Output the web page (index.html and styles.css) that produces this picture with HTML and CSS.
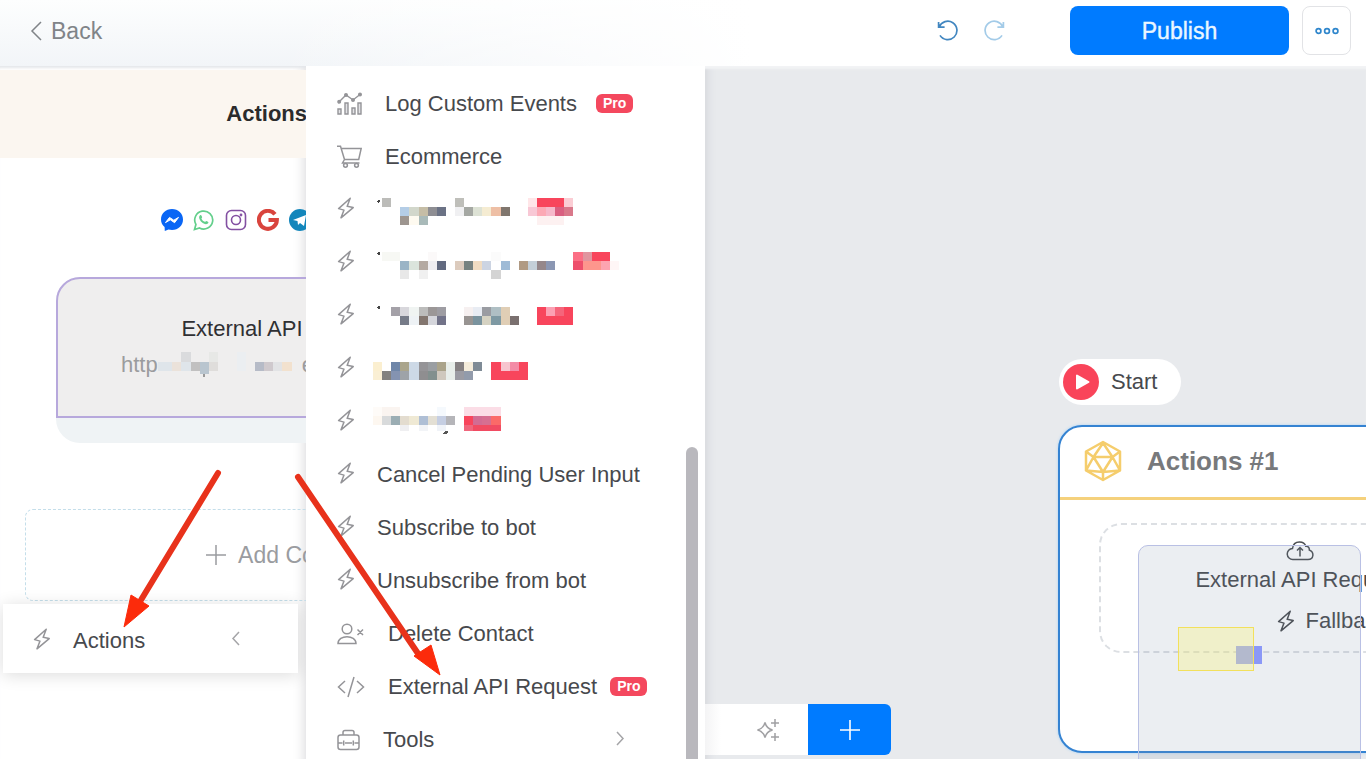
FILE: index.html
```html
<!DOCTYPE html>
<html lang="en">
<head>
<meta charset="utf-8">
<title>Flow builder</title>
<link rel="stylesheet" href="styles.css">
</head>
<body>
<svg class="defs" aria-hidden="true">
  <symbol id="bolt" viewBox="0 0 17 22"><path d="M13.200 1.200 1.600 11.600l5.400 1.500-3 7.700L16.200 10.600l-6-1.300z" fill="none" stroke="currentColor" stroke-width="1.500" stroke-linejoin="round"/></symbol>
</svg>
<header class="topbar">
  <button class="back" type="button">
    <svg width="12" height="20" viewBox="0 0 12 20"><path d="M11 1 2 10 11 19" fill="none" stroke="currentColor" stroke-width="1.5"/></svg>
    Back
  </button>
  <div class="history">
    <button type="button" aria-label="Undo"><svg width="22" height="22" viewBox="0 0 22 22" fill="none" stroke="#4186c0" stroke-width="1.7"><path d="M1.600 2v5.200h6M2.200 7A9.200 9.200 0 1 1 3 15.400"/></svg></button>
    <button type="button" aria-label="Redo"><svg width="22" height="22" viewBox="0 0 22 22" fill="none" stroke="#a3cbe8" stroke-width="1.7"><path d="M20.400 2v5.200h-6M19.800 7A9.200 9.200 0 1 0 19 15.400"/></svg></button>
  </div>
  <button class="publish" type="button">Publish</button>
  <button class="more" type="button" aria-label="More"><svg width="24" height="8" viewBox="0 0 24 8" fill="none" stroke="#2f86cc" stroke-width="1.700"><circle cx="3.500" cy="4" r="2.400"/><circle cx="12" cy="4" r="2.400"/><circle cx="20.500" cy="4" r="2.400"/></svg></button>
</header>

<main class="workspace">
  <section class="panel">
    <div class="panel-inner">
      <h1 class="panel-title">Actions #1</h1>
      <div class="channels">
        <svg width="22" height="22" viewBox="0 0 22 22"><path d="M11 0C4.800 0 0 4.500 0 10.500c0 3.100 1.300 5.700 3.600 7.600L3.800 22l3.700-1.400c1.100.3 2.300.4 3.500.4 6.200 0 11-4.500 11-10.500S17.200 0 11 0z" fill="#0a66f5"/><path d="m4.500 13.600 4-5.200 4.300 2.800 4.700-2.800-3.900 5.300-4.300-2.900z" fill="#fff" stroke="#fff" stroke-linejoin="round"/></svg>
        <svg width="22" height="22" viewBox="0 0 22 22" fill="none" stroke="#63cf8b" stroke-width="1.700"><path d="m1.500 20.500 1.400-5A9 9 0 1 1 6.500 19z"/><path d="M7 6.300c1-.7 1.500.2 2.100 1.800.2.700-.7 1.100-.6 1.600.7 1.500 1.800 2.500 3.300 3.100.7.100 1-.9 1.600-.9 1.700.8 2.400 1.100 2 1.900-1.300 2.500-4.700 1.300-6.600-.5C6.500 11.200 5.200 8 7 6.300z" fill="#63cf8b" stroke="none"/></svg>
        <svg width="22" height="22" viewBox="0 0 22 22" fill="none" stroke="#8350a2" stroke-width="1.600"><rect x="1.500" y="1.500" width="19" height="19" rx="5"/><circle cx="11" cy="11" r="4.500"/><circle cx="16" cy="6" r=".6"/></svg>
        <svg width="22" height="22" viewBox="0 0 22 22" fill="none" stroke="#d9443d" stroke-width="4"><path d="M18 5.300A9 9 0 1 0 19.900 11H11.500"/></svg>
        <svg width="22" height="22" viewBox="0 0 22 22"><circle cx="11" cy="11" r="11" fill="#1386bb"/><path d="m4 11 13-5-2 11-4-3-2 2-.5-4z" fill="#fff"/></svg>
      </div>
      <article class="card">
        <div class="card-body">
          <div>External API Request</div>
          <div class="url">http<svg class="blur" width="144" height="36" viewBox="0 0 144 36" aria-hidden="true">
            <g fill="#dfe5ea"><path d="M0 15h14v9H0z"/><path d="M23 15h10v9H23z"/></g>
            <path d="M14 15h9v9h-9z" fill="#ebe2da"/><path d="M23 5h10v10H23z" fill="#dadbdd"/>
            <path d="M33 15h9v9h-9z" fill="#c1c0c0"/><path d="M42 15h9v12h-9z" fill="#b9c5cf"/><path d="M45 27h2v3h-2z" fill="#999"/>
            <path d="M51 5h9v10h-9z" fill="#e7e8e6"/><path d="M51 15h9v9h-9z" fill="#dfdddb"/>
            <path d="M79 5h9v19h-9z" fill="#ebeef1"/><path d="M97 15h9v9h-9z" fill="#b6bbc7"/><path d="M106 15h9v9h-9z" fill="#cfc9cd"/>
            <path d="M115 15h9v9h-9z" fill="#e2e3e5"/><path d="M124 15h10v9h-10z" fill="#f2e1ce"/>
          </svg>e</div>
        </div>
      </article>
      <button class="add" type="button"><svg width="20" height="20" viewBox="0 0 20 20"><path d="M10 0v20M0 10h20" stroke="currentColor" stroke-width="1.500"/></svg>Add Content</button>
    </div>
    <button class="actions" type="button">
      <svg class="bolt"><use href="#bolt"/></svg>
      <span>Actions</span>
      <svg class="prev" width="9" height="15" viewBox="0 0 9 15"><path d="m8 1-6 6.500L8 14" fill="none" stroke="#a5a5a8" stroke-width="1.500"/></svg>
    </button>
  </section>

  <nav class="menu">
    <button class="item" type="button">
      <svg width="25" height="24" viewBox="0 0 25 24" fill="none" stroke="currentColor" stroke-width="1.400"><path d="m2 10 7-7 7 5 7-5.500"/><g fill="currentColor"><circle cx="2.200" cy="9.800" r="1.300"/><circle cx="9" cy="3" r="1.300"/><circle cx="16" cy="8" r="1.300"/><circle cx="23" cy="2.500" r="1.300"/></g><path d="M1 17h3v5H1zM8 11h3v11H8zM15 16h3v6h-3zM21 11h3v11h-3z" fill="#e3e3e6"/></svg>
      <span>Log Custom Events</span><span class="pro wide">Pro</span>
    </button>
    <button class="item" type="button">
      <svg width="25" height="24" viewBox="0 0 25 24" fill="none" stroke="currentColor" stroke-width="1.500"><path d="M0 1.200h3.500L7.500 14.500h14.200L24.200 3.500H4.300M7.500 14.500l-2 3.500h17"/><circle cx="8.500" cy="20.300" r="1.900"/><circle cx="19.500" cy="20.300" r="1.900"/></svg>
      <span>Ecommerce</span>
    </button>
    <button class="item" type="button" aria-label="Action">
      <svg class="bolt"><use href="#bolt"/></svg>
      <svg class="mosaic" viewBox="0 -1.22 27 5" preserveAspectRatio="none">
        <circle cx=".65" cy=".35" r=".17" fill="#444"/><rect x="1" fill="#bcbcb9"/><rect x="9" fill="#bfbfba"/><rect x="17" fill="#ffe6e8"/><rect x="18" fill="#f8455c"/><rect x="19" fill="#f8455c"/><rect x="20" fill="#f8455c"/><rect x="21" fill="#fbcdd4"/>
        <rect x="3" y="1" fill="#b4cde6"/><rect x="4" y="1" fill="#d2d7cb"/><rect x="5" y="1" fill="#c5bda6"/><rect x="6" y="1" fill="#8e8e93"/><rect x="7" y="1" fill="#6b7285"/><rect x="9" y="1" fill="#f0f0f2"/><rect x="10" y="1" fill="#a5a8a3"/><rect x="11" y="1" fill="#dde2d5"/><rect x="12" y="1" fill="#f5ecd2"/><rect x="13" y="1" fill="#eebfa5"/><rect x="14" y="1" fill="#80766e"/><rect x="17" y="1" fill="#f8c8d5"/><rect x="18" y="1" fill="#fca9b5"/><rect x="19" y="1" fill="#f6b8ca"/><rect x="20" y="1" fill="#d95f80"/><rect x="21" y="1" fill="#d9788a"/>
        <rect x="3" y="2" fill="#9d958f"/><rect x="4" y="2" fill="#fefaf0"/><rect x="5" y="2" fill="#a9bab9"/><rect x="18" y="2" fill="#fdf1f1"/><rect x="19" y="2" fill="#fdf1f1"/><rect x="20" y="2" fill="#fdf1f1"/>
      </svg>
    </button>
    <button class="item" type="button" aria-label="Action">
      <svg class="bolt"><use href="#bolt"/></svg>
      <svg class="mosaic" viewBox="0 -1.33 27 5" preserveAspectRatio="none">
        <circle cx=".65" cy=".2" r=".17" fill="#444"/><rect x="1" fill="#f7f8f4"/><rect x="2" fill="#f7f8f4"/><rect x="6" fill="#fbf9f9"/><rect x="13" fill="#fbfbfb"/><rect x="22" fill="#fb6f85"/><rect x="23" fill="#e0959f"/><rect x="24" fill="#f8455c"/><rect x="25" fill="#f8455c"/>
        <rect x="3" y="1" fill="#9ab4c6"/><rect x="4" y="1" fill="#dbe4dc"/><rect x="5" y="1" fill="#b4a9a2"/><rect x="6" y="1" fill="#efeef2"/><rect x="7" y="1" fill="#626a80"/><rect x="9" y="1" fill="#dccbbd"/><rect x="10" y="1" fill="#768280"/><rect x="11" y="1" fill="#f0dcc2"/><rect x="12" y="1" fill="#ccd4e2"/><rect x="14" y="1" fill="#9fbbd6"/><rect x="16" y="1" fill="#b09a83"/><rect x="17" y="1" fill="#c4cfd8"/><rect x="18" y="1" fill="#95878a"/><rect x="19" y="1" fill="#8b97b3"/><rect x="22" y="1" fill="#ee4f6c"/><rect x="23" y="1" fill="#fd968d"/><rect x="24" y="1" fill="#fd968d"/><rect x="25" y="1" fill="#fda4b0"/><rect x="26" y="1" fill="#fff6f6"/>
        <rect x="3" y="2" fill="#e8e8e8"/><rect x="5" y="2" fill="#f0f0f0"/><rect x="13" y="2" fill="#d4d4d4"/>
      </svg>
    </button>
    <button class="item" type="button" aria-label="Action">
      <svg class="bolt"><use href="#bolt"/></svg>
      <svg class="mosaic" viewBox="0 -1.56 27 5" preserveAspectRatio="none">
        <circle cx=".65" cy="0.05" r=".17" fill="#444"/><rect x="2" fill="#a4a1a8"/><rect x="3" fill="#d8d7dc"/><rect x="4" fill="#f0f4f2"/><rect x="5" fill="#bcbcbb"/><rect x="6" fill="#9b9797"/><rect x="7" fill="#9e9da3"/><rect x="10" fill="#f6f0f0"/><rect x="11" fill="#e8ecf3"/><rect x="12" fill="#9a9ca2"/><rect x="13" fill="#afbfc4"/><rect x="14" fill="#e0ceb5"/><rect x="18" fill="#f8455c"/><rect x="19" fill="#fca0b3"/><rect x="20" fill="#f5657b"/><rect x="21" fill="#f8455c"/>
        <rect x="3" y="1" fill="#767b88"/><rect x="4" y="1" fill="#eef2f5"/><rect x="5" y="1" fill="#83766f"/><rect x="6" y="1" fill="#d5d6dc"/><rect x="7" y="1" fill="#727389"/><rect x="10" y="1" fill="#989492"/><rect x="11" y="1" fill="#7a939e"/><rect x="12" y="1" fill="#d5d2c2"/><rect x="13" y="1" fill="#7e99a3"/><rect x="14" y="1" fill="#e0ceb5"/><rect x="15" y="1" fill="#7a706f"/><rect x="18" y="1" fill="#f8455c"/><rect x="19" y="1" fill="#f8455c"/><rect x="20" y="1" fill="#f8455c"/><rect x="21" y="1" fill="#f8455c"/>
      </svg>
    </button>
    <button class="item" type="button" aria-label="Action">
      <svg class="bolt"><use href="#bolt"/></svg>
      <svg class="mosaic" viewBox="0 -1.78 27 5" preserveAspectRatio="none">
        <rect x="0" fill="#fbefd0"/><rect x="2" fill="#6f86a8"/><rect x="3" fill="#aaa58c"/><rect x="4" fill="#cdd9e6"/><rect x="5" fill="#959497"/><rect x="6" fill="#9a9ea2"/><rect x="7" fill="#aaa38a"/><rect x="8" fill="#e8eeea"/><rect x="9" fill="#858082"/><rect x="10" fill="#f5ecdb"/><rect x="11" fill="#7f8b96"/><rect x="13" fill="#f8455c"/><rect x="14" fill="#f7c5cf"/><rect x="15" fill="#f38ba6"/><rect x="16" fill="#f8455c"/>
        <rect x="0" y="1" fill="#faefd4"/><rect x="1" y="1" fill="#83817f"/><rect x="2" y="1" fill="#8493b1"/><rect x="3" y="1" fill="#9ea3a8"/><rect x="4" y="1" fill="#cdd9e6"/><rect x="5" y="1" fill="#8f8e90"/><rect x="6" y="1" fill="#82908e"/><rect x="7" y="1" fill="#cfc8bd"/><rect x="8" y="1" fill="#e8eeea"/><rect x="9" y="1" fill="#9b9ba3"/><rect x="10" y="1" fill="#929bab"/><rect x="13" y="1" fill="#f8455c"/><rect x="14" y="1" fill="#f8455c"/><rect x="15" y="1" fill="#f8455c"/><rect x="16" y="1" fill="#f8455c"/>
      </svg>
    </button>
    <button class="item" type="button" aria-label="Action">
      <svg class="bolt"><use href="#bolt"/></svg>
      <svg class="mosaic" viewBox="0 -0.89 27 5" preserveAspectRatio="none">
        <rect x="0" fill="#fefbf8"/><rect x="1" fill="#faf4f0"/><rect x="2" fill="#faf4f0"/><rect x="7" fill="#f5f9fd"/><rect x="10" fill="#fbdde6"/><rect x="11" fill="#fbdde6"/><rect x="12" fill="#fbdde6"/><rect x="13" fill="#fbdde6"/>
        <rect x="0" y="1" fill="#fdf7f0"/><rect x="1" y="1" fill="#d8dadb"/><rect x="2" y="1" fill="#9badb3"/><rect x="3" y="1" fill="#e3dccf"/><rect x="4" y="1" fill="#efe9d4"/><rect x="5" y="1" fill="#afbfd5"/><rect x="6" y="1" fill="#e3dfd4"/><rect x="7" y="1" fill="#c5cee2"/><rect x="8" y="1" fill="#b5b5b9"/><rect x="10" y="1" fill="#f8455c"/><rect x="11" y="1" fill="#d26c93"/><rect x="12" y="1" fill="#d66f91"/><rect x="13" y="1" fill="#fb6a68"/>
        <g class="short"><rect x="3" y="2" fill="#efeff1"/><rect x="5" y="2" fill="#f2f4f7"/><rect x="7" y="2" fill="#f0f3f8"/><rect x="10" y="2" fill="#f0667c"/><rect x="11" y="2" fill="#f14b62"/><rect x="12" y="2" fill="#f14b62"/><rect x="13" y="2" fill="#f14b62"/></g>
        <path d="M7.900 2.700h.4l-.2.300h-.4z" fill="#555"/>
      </svg>
    </button>
    <button class="item" type="button"><svg class="bolt"><use href="#bolt"/></svg><span>Cancel Pending User Input</span></button>
    <button class="item" type="button"><svg class="bolt"><use href="#bolt"/></svg><span>Subscribe to bot</span></button>
    <button class="item" type="button"><svg class="bolt"><use href="#bolt"/></svg><span>Unsubscribe from bot</span></button>
    <button class="item" type="button">
      <svg width="28" height="24" viewBox="0 0 28 24" fill="none" stroke="currentColor" stroke-width="1.500"><circle cx="10" cy="7" r="4.800"/><path d="M1 21.500c0-9 18-9 18 0zM20.500 7.500l5.500 5.500M26 7.500 20.500 13"/></svg>
      <span>Delete Contact</span>
    </button>
    <button class="item" type="button">
      <svg width="28" height="24" viewBox="0 0 28 24" fill="none" stroke="currentColor" stroke-width="1.500"><path d="m8 6-6.500 6L8 18M20 6l6.500 6-6.500 6M17 2l-6 20"/></svg>
      <span>External API Request</span><span class="pro">Pro</span>
    </button>
    <button class="item" type="button">
      <svg width="23" height="22" viewBox="0 0 23 22" fill="none" stroke="currentColor" stroke-width="1.500"><rect x="1" y="6" width="21" height="14.500" rx="2.500"/><path d="M6 6V3.500A2 2 0 0 1 8 1.500h7a2 2 0 0 1 2 2V6M1 14h4.500M8 14h7M17.500 14H22M6.700 11.500v5M16.300 11.500v5"/></svg>
      <span>Tools</span>
      <svg class="next" width="9" height="15" viewBox="0 0 9 15"><path d="m1 1 6 6.500L1 14" fill="none" stroke="currentColor" stroke-width="1.500"/></svg>
    </button>
    <div class="thumb"></div>
  </nav>

  <section class="canvas">
    <div class="start">
      <svg width="36" height="36" viewBox="0 0 36 36"><circle cx="18" cy="18" r="18" fill="#f9445a"/><path d="M14 11.500v13l11.500-6.500z" fill="#fff" stroke="#fff" stroke-width="2" stroke-linejoin="round"/></svg>
      Start
    </div>
    <article class="node">
      <h2 class="node-head">
        <svg width="38" height="42" viewBox="0 0 38 42" fill="none" stroke="#f5cd6c" stroke-width="2.500" stroke-linejoin="round"><path d="M19 2 36 11.500v19L19 40 2 30.500v-19zM19 3 9.500 17h19zM9.500 17 19 32l9.500-15M2 11.500 9.500 17 2 30.500 19 32l17-1.500L28.500 17 36 11.500M19 32v8"/></svg>
        Actions #1
      </h2>
      <div class="slot">
        <svg width="28" height="20" viewBox="0 0 28 20" fill="none" stroke="#4b4e52" stroke-width="1.500"><path d="M7 18.500a5.500 5.500 0 0 1-.5-11C7 3 10 1 13.500 1c3 0 5.500 1.500 6.300 4.300 2.500-.2 3.700 1.500 3.500 3.700C28.500 11 28 18.500 22 18.500zM14 15.500V7M11 9.500 14 6.500l3 3"/></svg>
        <div class="slot-title">External API Request</div>
        <div class="slot-row"><svg class="bolt"><use href="#bolt"/></svg>Fallback</div>
      </div>
    </article>
    <div class="minimap"><div class="mini-node"></div><div class="mini-view"></div></div>
    <div class="tools">
      <button class="magic" type="button" aria-label="Assist"><svg width="24" height="24" viewBox="0 0 24 24" fill="none" stroke="#a0a0a3" stroke-width="1.500"><path d="M9 4.500q1.500 6 7.500 7.500-6 1.500-7.500 7.500Q7.500 13.500 1.500 12 7.500 10.500 9 4.500zM19 1v8M15 5h8M19 15v8M15 19h8"/></svg></button>
      <button class="plus" type="button" aria-label="Add"><svg width="20" height="20" viewBox="0 0 20 20"><path d="M10 0v20M0 10h20" stroke="#fff" stroke-width="1.600"/></svg></button>
    </div>
  </section>
</main>

<svg class="arrows" width="460" height="700" viewBox="0 0 460 700" aria-hidden="true">
  <g stroke="#e8321b" stroke-width="6" stroke-linecap="round"><path d="M218 473 141 600M298 477l121 178"/></g>
  <path d="m124 627 7-32 18 11zM440 675l-26-19 17-11z" fill="#fc2b0b" stroke="#fc2b0b"/>
</svg>
</body>
</html>
```
FILE: styles.css
```css
* { box-sizing: border-box; }

body {
  margin: 0;
  height: 100vh;
  overflow: hidden;
  display: flex;
  flex-direction: column;
  font: 22px/26px "Liberation Sans", Arial, sans-serif;
  color: #47494d;
}

button {
  margin: 0;
  padding: 0;
  border: 0;
  background: none;
  font: inherit;
  color: inherit;
}

svg { display: block; flex: none; }
.defs { position: absolute; width: 0; height: 0; }
.bolt { width: 17px; height: 22px; }

.topbar {
  display: flex;
  align-items: center;
  gap: 13px;
  padding: 6px 15px 11px 30px;
  background: linear-gradient(90deg, transparent 20%, #fff 55%), linear-gradient(#fdfefe, #f2f5f8);
}
.back {
  display: flex;
  align-items: center;
  gap: 9px;
  margin-right: auto;
  font-size: 23px;
  color: #808488;
}
.history { display: flex; gap: 24px; margin-right: 52px; }
.publish {
  width: 219px;
  height: 49px;
  border-radius: 8px;
  background: #007bff;
  color: #e9f6ff;
  font-size: 23px;
  -webkit-text-stroke: 0.4px #e9f6ff;
}
.more {
  display: grid;
  place-items: center;
  width: 49px;
  height: 49px;
  border: 1px solid #e2e3e6;
  border-radius: 8px;
  background: #fff;
}

.workspace { flex: 1; min-height: 0; display: flex; }

.panel {
  flex: none;
  width: 306px;
  overflow: hidden;
  background: #fff;
  box-shadow: inset 0 4px 3px -2px #e4e6e9, inset -14px 0 12px -12px #dcdcde;
}
.panel-inner { width: 564px; }
.panel-title {
  margin: 4px 0 0;
  padding: 31px 0;
  background: #fbf6f0;
  font-size: 22px;
  line-height: 26px;
  text-align: center;
  color: #2b2b2c;
}
.channels { display: flex; gap: 10px; padding: 51px 0 0 161px; }
.card {
  width: 460px;
  margin: 46px 0 0 56px;
  padding-bottom: 25px;
  border-radius: 24px;
  background: #eff3f5;
}
.card-body {
  padding: 32px 0 33px;
  border: 2px solid #b7a8dc;
  border-radius: 24px 24px 0 0;
  background: #efeeee;
  line-height: 36px;
  text-align: center;
  color: #2f3033;
}
.url { display: flex; padding-left: 63px; color: #9b9c9e; }
.add {
  display: flex;
  align-items: center;
  justify-content: center;
  gap: 12px;
  width: 522px;
  height: 92px;
  margin: 66px 0 0 25px;
  border: 1px dashed #c4deea;
  border-radius: 8px;
  font-size: 23px;
  color: #9a9ca0;
}
.actions {
  position: relative;
  display: flex;
  align-items: center;
  width: 295px;
  height: 69px;
  margin: 3px 0 0 3px;
  padding: 4px 58px 0 30px;
  background: #fff;
  box-shadow: 0 2px 16px rgba(0, 0, 0, .14);
}
.actions .bolt { margin: 0 23px 3px 0; color: #949498; }
.actions .prev { margin-bottom: 5px; }
.actions span { margin-right: auto; }

.menu {
  position: relative;
  flex: none;
  width: 399px;
  overflow: hidden;
  padding-top: 11px;
  background: #fff;
}
.item {
  display: flex;
  align-items: center;
  width: 100%;
  height: 53px;
  padding-left: 31px;
  text-align: left;
}
.item > svg { color: #949498; margin-right: 23px; }
.item > .bolt { margin-bottom: 3px; }
.item > .mosaic {
  width: 246px;
  height: 45px;
  margin: 0 0 0 -4px;
  shape-rendering: crispEdges;
}
.mosaic rect { width: 1px; height: 1px; }
.mosaic .short rect { height: 0.7px; }
.pro {
  margin-left: 13px;
  padding: 0 7px;
  border-radius: 6px;
  background: #f4485e;
  color: #fff;
  font-size: 14px;
  font-weight: bold;
  line-height: 19px;
}
.pro.wide { margin-left: 19px; }
.item > .next { margin: 0 80px 3px auto; color: #a5a5a8; }
.thumb {
  position: absolute;
  top: 381px;
  right: 7px;
  bottom: -12px;
  width: 12px;
  border-radius: 6px;
  background: #b9b8bd;
}

.canvas {
  position: relative;
  flex: 1;
  min-width: 0;
  overflow: hidden;
  background: #e8eaed;
  box-shadow: inset 0 4px 2px -1px #f2f3f5, inset 12px 0 10px -10px #d4d5d9;
}
.start {
  position: absolute;
  left: 354px;
  top: 293px;
  display: flex;
  align-items: center;
  gap: 12px;
  padding: 5px 24px 5px 4px;
  border-radius: 23px;
  background: #fff;
}
.node {
  position: absolute;
  left: 353px;
  top: 359px;
  width: 480px;
  height: 328px;
  border: 2px solid #3583d2;
  border-radius: 24px;
  background: #fff;
  box-shadow: 0 0 3px #a9d2f5;
}
.node-head {
  display: flex;
  align-items: center;
  gap: 25px;
  margin: 0;
  padding: 13px 0 15px 24px;
  border-bottom: 3px solid #f5d17c;
  font-size: 26px;
  color: #77797c;
}
.slot {
  display: flex;
  flex-direction: column;
  align-items: center;
  width: 402px;
  height: 130px;
  margin: 23px 0 0 39px;
  padding-top: 16px;
  border: 2px dashed #dcdfe3;
  border-radius: 22px;
}
.slot-title { margin: 6px 0 15px; }
.slot-row { display: flex; align-items: center; gap: 12px; margin-left: 64px; }
.minimap {
  position: absolute;
  left: 433px;
  top: 479px;
  width: 223px;
  height: 240px;
  border: 1px solid #b9c0e4;
  border-radius: 10px;
  background: rgba(120, 140, 170, .15);
}
.mini-node {
  position: absolute;
  left: 97px;
  top: 100px;
  width: 26px;
  height: 18px;
  background: #8b98f7;
}
.mini-view {
  position: absolute;
  left: 39px;
  top: 81px;
  width: 76px;
  height: 44px;
  border: 1px solid #f2e05c;
  background: rgba(250, 244, 130, .36);
}
.tools {
  position: absolute;
  left: 0;
  bottom: 4px;
  display: flex;
}
.tools button { display: grid; place-items: center; height: 51px; }
.tools .magic { width: 103px; padding-left: 22px; background: linear-gradient(90deg, #f4f4f5, #fff 16px); }
.tools .plus { width: 83px; border-radius: 0 6px 6px 0; background: #007bff; }

.arrows {
  position: absolute;
  left: 0;
  top: 0;
  pointer-events: none;
}
```
